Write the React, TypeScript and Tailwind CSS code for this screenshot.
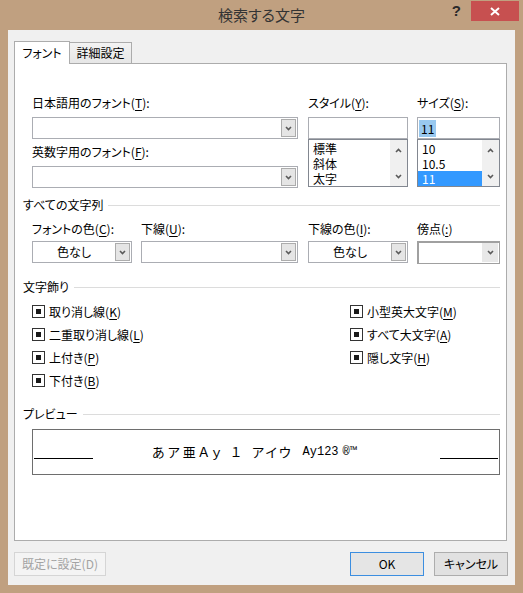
import React from 'react';

const jp = "font-['Noto_Sans_CJK_JP',sans-serif] [font-feature-settings:'palt']";

function Chevron({ up = false }: { up?: boolean }) {
  return (
    <svg width="7" height="5" viewBox="0 0 7 5" className={up ? 'rotate-180' : ''}>
      <path d="M1 1l2.5 2.5L6 1" fill="none" stroke="#5a5a5a" strokeWidth="1.6" />
    </svg>
  );
}

function U({ c }: { c: string }) {
  return <span className="underline underline-offset-[2px]">{c}</span>;
}

function Combo({ className, children }: { className: string; children?: React.ReactNode }) {
  return (
    <div className={`flex h-[22px] border border-[#abadb3] bg-white ${className}`}>
      <div className="flex flex-1 items-center justify-center">{children}</div>
      <div className="my-px mr-px flex w-[15px] items-center justify-center border border-[#acacac] bg-[#e5e5e5]">
        <Chevron />
      </div>
    </div>
  );
}

function ListBox({ items, selected }: { items: string[]; selected?: number }) {
  return (
    <div className="flex h-[48px] border border-[#828790] bg-white">
      <div className="flex flex-1 flex-col pt-px">
        {items.map((t, i) => (
          <div
            key={t}
            className={`h-[15px] pl-[4px] leading-[15px] ${i === selected ? 'bg-[#3399ff] text-white' : ''}`}
          >
            {t}
          </div>
        ))}
      </div>
      <div className="flex w-[17px] flex-col items-center justify-between bg-[#f0f0f0] pb-[7px] pt-[8px]">
        <Chevron up />
        <Chevron />
      </div>
    </div>
  );
}

function Section({ title }: { title: string }) {
  return (
    <div className="flex h-[16px] items-center gap-[5px] pl-[8px] pr-[6px]">
      <span>{title}</span>
      <div className="h-px flex-1 bg-[#dcdcdc]" />
    </div>
  );
}

function Check({ children }: { children: React.ReactNode }) {
  return (
    <div className="flex h-[23px] items-center gap-[4px]">
      <div className="flex h-[13px] w-[13px] items-center justify-center border border-[#333333] bg-white">
        <div className="h-[5px] w-[5px] bg-[#1a1a1a]" />
      </div>
      <span>{children}</span>
    </div>
  );
}

export default function App() {
  return (
    <div className={`flex h-[593px] w-[523px] flex-col bg-[#c0a080] text-[12px] leading-[16px] text-black ${jp}`}>
      {/* title bar */}
      <div className="grid h-[30px] grid-cols-[1fr_auto_1fr]">
        <div />
        <div className="flex items-center text-[15px] text-[#333333]">検索する文字</div>
        <div className="flex items-start justify-end">
          <span className="mr-[10px] mt-[3px] font-['Liberation_Sans',sans-serif] text-[15px] font-bold text-[#2a2a2a]">?</span>
          <div className="mr-[4px] mt-px flex h-[20px] w-[48px] items-center justify-center bg-[#c75050]">
            <svg width="10" height="9" viewBox="0 0 10 9">
              <path d="M1 1l8 7M9 1L1 8" stroke="white" strokeWidth="2" />
            </svg>
          </div>
        </div>
      </div>

      {/* client */}
      <div className="ml-[8px] flex h-[555px] w-[507px] flex-col bg-[#f0f0f0]">
        <div className="relative z-10 -mb-px ml-[6px] mt-[11px] flex h-[23px] items-end">
          <div className="flex h-[23px] w-[56px] items-center justify-center border border-b-0 border-[#acacac] bg-white pb-px">
            フォント
          </div>
          <div className="flex h-[22px] w-[62px] items-center justify-center border border-l-0 border-[#acacac] bg-gradient-to-b from-[#f3f3f3] to-[#e6e6e6]">
            詳細設定
          </div>
        </div>

        <div className="ml-[6px] flex h-[478px] w-[493px] flex-col border border-[#acacac] bg-white">
          {/* font selection */}
          <div className="ml-[17px] mt-[31px] flex gap-[10px]">
            <div className="flex w-[266px] flex-col">
              <div>
                日本語用のフォント(<U c="T" />):
              </div>
              <Combo className="mt-[6px] w-[266px]" />
              <div className="mt-[5px]">
                英数字用のフォント(<U c="F" />):
              </div>
              <Combo className="mt-[6px] w-[266px]" />
            </div>
            <div className="flex w-[100px] flex-col">
              <div>
                スタイル(<U c="Y" />):
              </div>
              <div className="mt-[6px] h-[22px] border border-[#abadb3] bg-white" />
              <ListBox items={['標準', '斜体', '太字']} />
            </div>
            <div className="-ml-px flex w-[83px] flex-col">
              <div>
                サイズ(<U c="S" />):
              </div>
              <div className="mt-[6px] flex h-[22px] items-center border border-[#abadb3] bg-white pl-px">
                <span className="h-[17px] bg-[#99c9ef] px-[2px] leading-[17px]">11</span>
              </div>
              <ListBox items={['10', '10.5', '11']} selected={2} />
            </div>
          </div>

          {/* all text */}
          <div className="mt-[9px]">
            <Section title="すべての文字列" />
          </div>
          <div className="ml-[17px] mt-[8px] flex items-start">
            <div className="flex w-[100px] flex-col">
              <div>
                フォントの色(<U c="C" />):
              </div>
              <Combo className="mt-[4px] w-[100px]">色なし</Combo>
            </div>
            <div className="ml-[9px] flex w-[157px] flex-col">
              <div>
                下線(<U c="U" />):
              </div>
              <Combo className="mt-[4px] w-[157px]" />
            </div>
            <div className="ml-[10px] flex w-[100px] flex-col">
              <div>
                下線の色(<U c="I" />):
              </div>
              <Combo className="mt-[4px] w-[100px]">色なし</Combo>
            </div>
            <div className="ml-[9px] flex w-[83px] flex-col">
              <div>
                傍点(<U c=":" />)
              </div>
              <div className="mt-[4px] flex h-[23px] border border-t-2 border-l-2 border-[#a0a0a0] bg-white">
                <div className="flex-1" />
                <div className="mb-px mr-px flex w-[16px] items-center justify-center bg-[#e8e8e8]">
                  <Chevron />
                </div>
              </div>
            </div>
          </div>

          {/* effects */}
          <div className="mt-[15px]">
            <Section title="文字飾り" />
          </div>
          <div className="ml-[17px] mt-[5px] grid grid-cols-[318px_1fr]">
            <div className="flex flex-col">
              <Check>
                取り消し線(<U c="K" />)
              </Check>
              <Check>
                二重取り消し線(<U c="L" />)
              </Check>
              <Check>
                上付き(<U c="P" />)
              </Check>
              <Check>
                下付き(<U c="B" />)
              </Check>
            </div>
            <div className="flex flex-col">
              <Check>
                小型英大文字(<U c="M" />)
              </Check>
              <Check>
                すべて大文字(<U c="A" />)
              </Check>
              <Check>
                隠し文字(<U c="H" />)
              </Check>
            </div>
          </div>

          {/* preview */}
          <div className="mt-[14px]">
            <Section title="プレビュー" />
          </div>
          <div className="ml-[17px] mt-[7px] flex h-[46px] w-[468px] items-center border border-[#6e6e6e] bg-white">
            <div className="ml-px mt-[12px] h-px w-[59px] bg-black" />
            <div className="flex flex-1 items-center pl-[59px] text-[13px] leading-[16px]">
              <span className="tracking-[3px]">あア亜Ａｙ</span>
              <span className="ml-[7px]">１</span>
              <span className="ml-[11px] tracking-[2px]">アイウ</span>
              <span className="ml-[10px] font-['Liberation_Mono',monospace] text-[12px]">Ay123</span>
              <span className="ml-[4px] font-['Liberation_Mono',monospace] text-[12px]">®™</span>
            </div>
            <div className="mr-px mt-[12px] h-px w-[58px] bg-black" />
          </div>
        </div>

        {/* buttons */}
        <div className="ml-[6px] mr-[7px] mt-[11px] flex">
          <div className="flex h-[24px] w-[92px] items-center justify-center border border-[#d5d5d5] bg-[#f4f4f4] text-[#a3a3a3]">
            既定に設定(D)
          </div>
          <div className="flex-1" />
          <div className="flex h-[24px] w-[74px] items-center justify-center border border-[#3c8ee0] bg-[#e5e5e5]">
            OK
          </div>
          <div className="ml-[10px] flex h-[24px] w-[74px] items-center justify-center border border-[#adadad] bg-[#e1e1e1]">
            キャンセル
          </div>
        </div>
      </div>
    </div>
  );
}
